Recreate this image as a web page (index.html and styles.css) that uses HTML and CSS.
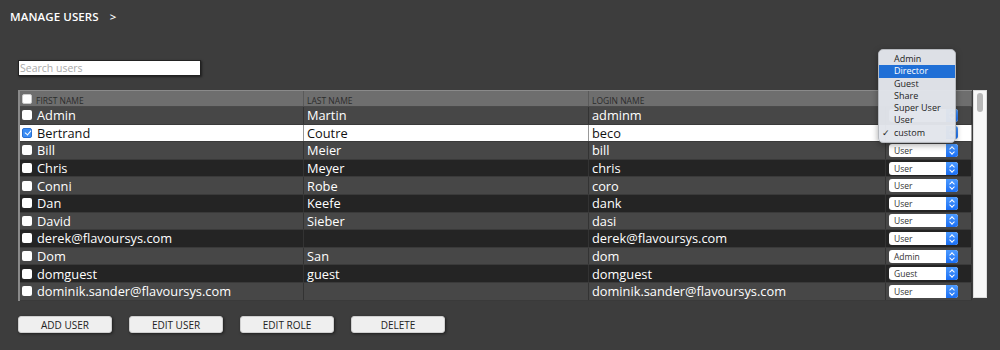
FILE: index.html
```html
<!DOCTYPE html>
<html lang="en">
<head>
    <meta charset="UTF-8">
    <title>Manage Users</title>
    <link rel="stylesheet" href="styles.css">
</head>
<body>
    <header class="crumbs">
        <h1>MANAGE USERS <span class="arrow">&gt;</span></h1>
    </header>
    <main>
        <div class="search">
            <input type="text" placeholder="Search users">
        </div>

        <div class="users">
            <div class="grid">
                <div class="row head">
                    <div class="cell"><span class="box"></span>FIRST NAME</div>
                    <div class="cell">LAST NAME</div>
                    <div class="cell">LOGIN NAME</div>
                    <div class="cell"></div>
                </div>
                <div class="row light">
                    <div class="cell"><span class="box"></span>Admin</div>
                    <div class="cell">Martin</div>
                    <div class="cell">adminm</div>
                    <div class="cell role"><div class="select"><span></span><i></i></div></div>
                </div>
                <div class="row selected">
                    <div class="cell"><span class="box checked"></span>Bertrand</div>
                    <div class="cell">Coutre</div>
                    <div class="cell">beco</div>
                    <div class="cell role"><div class="select"><span></span><i></i></div></div>
                </div>
                <div class="row light">
                    <div class="cell"><span class="box"></span>Bill</div>
                    <div class="cell">Meier</div>
                    <div class="cell">bill</div>
                    <div class="cell role"><div class="select"><span>User</span><i></i></div></div>
                </div>
                <div class="row dark">
                    <div class="cell"><span class="box"></span>Chris</div>
                    <div class="cell">Meyer</div>
                    <div class="cell">chris</div>
                    <div class="cell role"><div class="select"><span>User</span><i></i></div></div>
                </div>
                <div class="row light">
                    <div class="cell"><span class="box"></span>Conni</div>
                    <div class="cell">Robe</div>
                    <div class="cell">coro</div>
                    <div class="cell role"><div class="select"><span>User</span><i></i></div></div>
                </div>
                <div class="row dark">
                    <div class="cell"><span class="box"></span>Dan</div>
                    <div class="cell">Keefe</div>
                    <div class="cell">dank</div>
                    <div class="cell role"><div class="select"><span>User</span><i></i></div></div>
                </div>
                <div class="row light">
                    <div class="cell"><span class="box"></span>David</div>
                    <div class="cell">Sieber</div>
                    <div class="cell">dasi</div>
                    <div class="cell role"><div class="select"><span>User</span><i></i></div></div>
                </div>
                <div class="row dark">
                    <div class="cell"><span class="box"></span>derek@flavoursys.com</div>
                    <div class="cell"></div>
                    <div class="cell">derek@flavoursys.com</div>
                    <div class="cell role"><div class="select"><span>User</span><i></i></div></div>
                </div>
                <div class="row light">
                    <div class="cell"><span class="box"></span>Dom</div>
                    <div class="cell">San</div>
                    <div class="cell">dom</div>
                    <div class="cell role"><div class="select"><span>Admin</span><i></i></div></div>
                </div>
                <div class="row dark">
                    <div class="cell"><span class="box"></span>domguest</div>
                    <div class="cell">guest</div>
                    <div class="cell">domguest</div>
                    <div class="cell role"><div class="select"><span>Guest</span><i></i></div></div>
                </div>
                <div class="row light">
                    <div class="cell"><span class="box"></span>dominik.sander@flavoursys.com</div>
                    <div class="cell"></div>
                    <div class="cell">dominik.sander@flavoursys.com</div>
                    <div class="cell role"><div class="select"><span>User</span><i></i></div></div>
                </div>
            </div>
            <div class="scrollbar"><div class="thumb"></div></div>

            <!-- open role menu of the selected row -->
            <ul class="menu">
                <li>Admin</li>
                <li class="hover">Director</li>
                <li>Guest</li>
                <li>Share</li>
                <li>Super User</li>
                <li>User</li>
                <li class="current">custom</li>
            </ul>
        </div>

        <div class="actions">
            <button>ADD USER</button>
            <button>EDIT USER</button>
            <button>EDIT ROLE</button>
            <button>DELETE</button>
        </div>
    </main>
</body>
</html>
```

FILE: styles.css
```css
* {
    margin: 0;
    padding: 0;
    box-sizing: border-box;
}
body {
    font-family: "Open Sans", Arial, sans-serif;
    background: #3d3d3d;
    color: #fff;
    width: 1000px;
    height: 350px;
    overflow: hidden;
}
.crumbs {
    padding: 9px 0 0 10px;
    height: 28px;
}
.crumbs h1 {
    font-size: 11.5px;
    line-height: 16px;
    font-weight: 600;
    letter-spacing: 0.1px;
}
.crumbs .arrow {
    margin-left: 8px;
}
main {
    padding-left: 18px;
}
.search {
    display: flex;
    align-items: flex-start;
    padding-top: 32px;
    height: 62px;
}
.search input {
    width: 183px;
    height: 16px;
    border: 1px solid #222;
    box-shadow: 1px 1px 2px rgba(0, 0, 0, 0.5);
    font-family: inherit;
    font-size: 10.5px;
    padding: 0 1px;
    outline: none;
}
.search input::placeholder {
    color: #aaa;
}
.users {
    position: relative;
    display: flex;
    align-items: flex-start;
    height: 226px;
}
.grid {
    width: 954px;
    border-top: 1px solid #8a8a8a;
    border-left: 2px solid #8a8a8a;
}
.row {
    display: grid;
    grid-template-columns: 284px 285px 297px 86px;
    height: 17.6px;
    border-bottom: 1px solid #3a3a3a;
    font-size: 12.8px;
    font-weight: 500;
}
.row .cell {
    display: flex;
    align-items: center;
    padding-left: 3px;
    border-right: 1px solid #333;
    white-space: nowrap;
    overflow: hidden;
}
.row .cell:first-child {
    padding-left: 2px;
}
.light {
    background: #474747;
}
.dark {
    background: #242424;
}
.head {
    height: 16px;
    background: #6e6e6e;
    border-bottom: 1px solid #4a4a4a;
    color: #2c2c2c;
    font-size: 8.5px;
    font-weight: 500;
}
.head .cell {
    padding-top: 3px;
    border-right: 1px solid #5a5a5a;
}
.selected {
    background: #fff;
    color: #111;
    font-weight: 500;
}
.selected .cell {
    border-right: 1px solid #999;
}
.box {
    width: 10px;
    height: 10px;
    background: #fff;
    border-radius: 2px;
    margin-right: 5px;
    flex-shrink: 0;
}
.head .box {
    margin-top: -3px;
    margin-right: 4px;
    border: 1px solid #ccc;
}
.box.checked {
    background: #3b8df5;
    border: 1px solid #2a6fd0;
    position: relative;
}
.box.checked::after {
    content: "";
    position: absolute;
    left: 2.5px;
    top: 0.5px;
    width: 3px;
    height: 5px;
    border: solid #fff;
    border-width: 0 1.5px 1.5px 0;
    transform: rotate(40deg);
}
.role {
    padding-left: 2px;
}
.select {
    display: flex;
    width: 69px;
    height: 13px;
    background: #fff;
    border-radius: 3px;
    overflow: hidden;
    color: #333;
    font-size: 8.5px;
    font-weight: 500;
}
.select span {
    flex: 1;
    padding-left: 5px;
    line-height: 13px;
}
.select i {
    width: 12px;
    background: linear-gradient(#4d9bff, #1a6ff5);
    position: relative;
}
.select i::before,
.select i::after {
    content: "";
    position: absolute;
    left: 4px;
    width: 3px;
    height: 3px;
    border: solid #fff;
    border-width: 1px 0 0 1px;
}
.select i::before {
    top: 3px;
    transform: rotate(45deg);
}
.select i::after {
    top: 6px;
    transform: rotate(225deg);
}
.scrollbar {
    width: 14px;
    height: 208px;
    margin-left: 1px;
    background: #f8f8f8;
    border: 1px solid #ddd;
    padding: 2px 3px;
}
.thumb {
    width: 6px;
    height: 19px;
    border-radius: 3px;
    background: #b8b8b8;
}
.menu {
    position: absolute;
    left: 860px;
    top: -41px;
    width: 78px;
    padding: 3px 0;
    list-style: none;
    background: rgba(226, 229, 235, 0.97);
    border: 1px solid #b6b9be;
    border-radius: 5px;
    box-shadow: 0 2px 6px rgba(0, 0, 0, 0.35);
    color: #222;
    font-size: 9px;
    z-index: 2;
}
.menu li {
    height: 12.3px;
    line-height: 12.3px;
    padding-left: 15px;
    position: relative;
}
.menu li.hover {
    background: #1f6fd6;
    color: #fff;
}
.menu li.current::before {
    content: "\2713";
    position: absolute;
    left: 3px;
    font-size: 9px;
}
.actions {
    display: flex;
    gap: 17px;
}
.actions button {
    width: 94px;
    height: 17px;
    background: #efefef;
    border: 1px solid #cfcfcf;
    border-radius: 3px;
    box-shadow: 1px 1px 3px rgba(0, 0, 0, 0.5);
    font-family: inherit;
    font-size: 10px;
    font-weight: 500;
    color: #222;
    cursor: pointer;
}
```
